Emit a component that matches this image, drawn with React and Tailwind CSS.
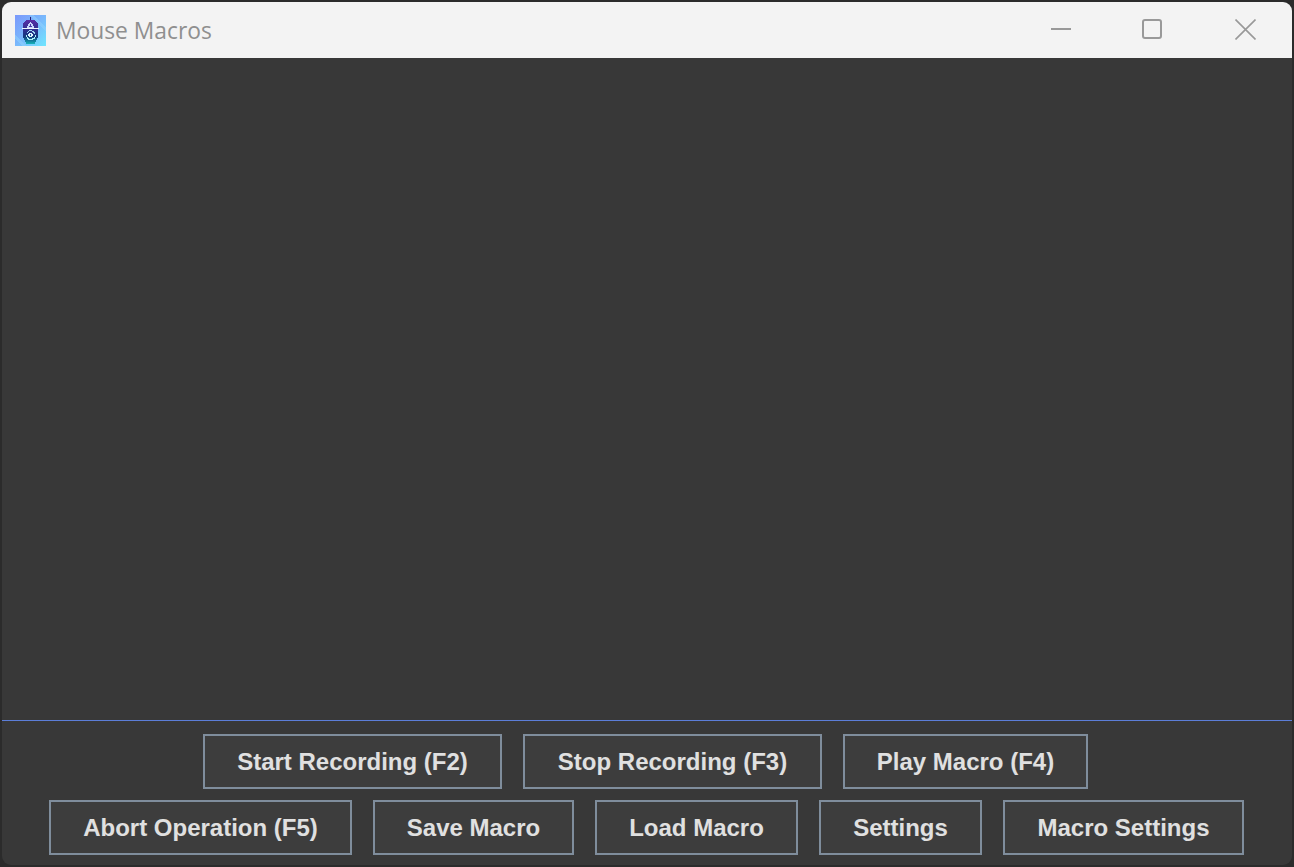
const row1 = [
  ["Start Recording (F2)", "w-[299px]"],
  ["Stop Recording (F3)", "w-[299px]"],
  ["Play Macro (F4)", "w-[245px]"],
];
const row2 = [
  ["Abort Operation (F5)", "w-[303px]"],
  ["Save Macro", "w-[201px]"],
  ["Load Macro", "w-[203px]"],
  ["Settings", "w-[163px]"],
  ["Macro Settings", "w-[241px]"],
];

function MacroButton({ label, width }) {
  return (
    <button className={`${width} h-[55px] border-2 border-[#7f8d9c] bg-[#3d3d3d] text-[#e0e0e0] text-[24px] font-bold [font-kerning:none] font-['Liberation_Sans',sans-serif] whitespace-nowrap`}>
      {label}
    </button>
  );
}

function AppIcon() {
  return (
    <svg width="31" height="31" viewBox="0 0 31 31" className="shrink-0" shapeRendering="crispEdges">
      <defs>
        <linearGradient id="iconBg" x1="0" y1="0" x2="1" y2="1">
          <stop offset="0" stopColor="#7a98fb" />
          <stop offset="0.5" stopColor="#79b8fc" />
          <stop offset="1" stopColor="#6fe6fe" />
        </linearGradient>
        <linearGradient id="iconBody" x1="0" y1="0" x2="0" y2="1">
          <stop offset="0" stopColor="#5a2fa6" />
          <stop offset="0.45" stopColor="#2a2f8c" />
          <stop offset="0.7" stopColor="#123a7c" />
          <stop offset="1" stopColor="#14b4b8" />
        </linearGradient>
      </defs>
      <rect width="31" height="31" fill="url(#iconBg)" />
      <path d="M18 0L31 13v4L14 0zM0 20l11 11H7L0 24z" fill="#8fd0fd" opacity="0.55" />
      <path d="M15 2h1v4h-1z" fill="#2b2270" />
      <path d="M11 5h9v1h1v1h1v1h1v15h-1v2h-1v2h-1v2h-9v-2h-1v-2H9v-2H8V8h1V7h1V6h1z" fill="url(#iconBody)" />
      <path d="M15 7h1v1h1v1h1v2h1v2h-7v-2h1V9h1V8h1z" fill="#c9d6fb" />
      <path d="M15 9h1v2h1v1h-3v-1h1z" fill="#4a3aa8" />
      <path d="M7 13h17v1H7z" fill="#eef6ff" />
      <path d="M12 17h1v-1h1v-1h3v1h2v1h1v2h-1v-1h-1v-1h-1v-1h-3v1h-1v1h-1z" fill="#9fd8f6" />
      <path d="M11 20h1v2h1v1h1v1h3v-1h2v-1h1v-2h1v2h-1v2h-2v1h-5v-1h-1v-2h-1z" fill="#a8f0f6" />
      <path d="M14 18h3v1h1v2h-1v1h-3v-1h-1v-2h1z" fill="#dcf6ff" />
      <path d="M15 19h1v2h-1z" fill="#1b5c9c" />
    </svg>
  );
}

export default function App() {
  return (
    <div className="w-[1294px] h-[867px] bg-[#2b2b2b] overflow-hidden">
      <div className="h-full flex flex-col rounded-[10px] overflow-hidden p-[2px]">
        <header className="h-[56px] bg-[#f3f3f3] rounded-t-[9px] flex items-center shrink-0 pl-[13px]">
          <AppIcon />
          <div className="ml-[10px] pt-[2px] text-[#8f8f8f] text-[22.8px] font-['Open_Sans',sans-serif]">Mouse Macros</div>
          <div className="ml-auto flex items-center text-[#999999] -translate-y-px">
            <svg width="20" height="20" viewBox="0 0 20 20" className="mr-[71px]">
              <path d="M0 10h20" stroke="currentColor" strokeWidth="2" />
            </svg>
            <svg width="20" height="20" viewBox="0 0 20 20" className="mr-[73px]">
              <rect x="1" y="1" width="18" height="18" rx="2" fill="none" stroke="currentColor" strokeWidth="2" />
            </svg>
            <svg width="21" height="21" viewBox="0 0 21 21" className="mr-[36px]">
              <path d="M0.5 0.5l20 20M20.5 0.5l-20 20" stroke="currentColor" strokeWidth="1.6" />
            </svg>
          </div>
        </header>
        <main className="flex-1 bg-[#383838] rounded-b-[9px] flex flex-col">
          <div className="flex-1" />
          <div className="h-px bg-[#5c7ed8]" />
          <div className="h-[144px] pt-[13px] flex flex-col items-center gap-[11px]">
            <div className="flex gap-[21px] pr-[3px]">
              {row1.map(([label, width]) => (
                <MacroButton key={label} label={label} width={width} />
              ))}
            </div>
            <div className="flex gap-[21px] pr-[1px]">
              {row2.map(([label, width]) => (
                <MacroButton key={label} label={label} width={width} />
              ))}
            </div>
          </div>
        </main>
      </div>
    </div>
  );
}
